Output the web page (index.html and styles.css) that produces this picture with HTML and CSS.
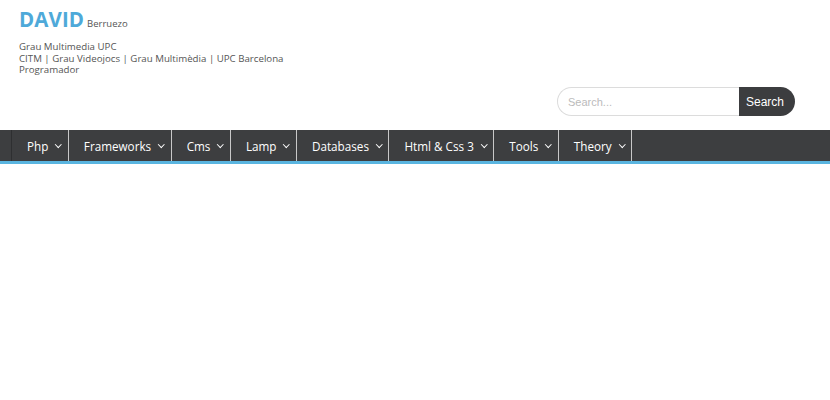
FILE: index.html
```html
<!DOCTYPE html>
<html>
<head>
<meta charset="utf-8">
<link rel="stylesheet" href="styles.css">
</head>
<body>
<header class="site-header">
  <div class="branding">
    <div class="site-title"><span class="title-main">DAVID</span><span class="title-sub">Berruezo</span></div>
    <p class="tagline">Grau Multimedia UPC<br>CITM | Grau Videojocs | Grau Multimèdia | UPC Barcelona<br>Programador</p>
  </div>
  <div class="search-row">
    <form class="search">
      <input class="search-input" type="text" placeholder="Search...">
      <button class="search-btn" type="button">Search</button>
    </form>
  </div>
</header>
<nav class="main-nav">
  <ul class="menu">
    <li class="menu-item">Php<span class="chev"></span></li>
    <li class="menu-item">Frameworks<span class="chev"></span></li>
    <li class="menu-item">Cms<span class="chev"></span></li>
    <li class="menu-item">Lamp<span class="chev"></span></li>
    <li class="menu-item">Databases<span class="chev"></span></li>
    <li class="menu-item">Html &amp; Css 3<span class="chev"></span></li>
    <li class="menu-item">Tools<span class="chev"></span></li>
    <li class="menu-item">Theory<span class="chev"></span></li>
  </ul>
</nav>
</body>
</html>
```
FILE: styles.css
```css
html, body {
  margin: 0;
  padding: 0;
  background: #fff;
}
body {
  font-family: "Open Sans", "Liberation Sans", sans-serif;
  color: #555;
}
.site-header {
  padding: 6px 35px 0 19px;
  height: 122px;
  box-sizing: border-box;
  display: flex;
  flex-direction: column;
}
.site-title {
  display: flex;
  align-items: baseline;
  height: 26px;
}
.title-main {
  font-size: 20.5px;
  font-weight: 700;
  color: #4ea9d9;
  line-height: 26px;
  letter-spacing: 0.1px;
}
.title-sub {
  font-size: 9.5px;
  color: #555;
  margin-left: 3px;
}
.tagline {
  margin: 9px 0 0;
  font-size: 9.7px;
  line-height: 11.5px;
  color: #555;
}
.search-row {
  display: flex;
  justify-content: flex-end;
  margin-top: 11.5px;
}
.search {
  display: flex;
  margin: 0;
}
.search-input {
  width: 182px;
  height: 29px;
  box-sizing: border-box;
  border: 1px solid #dcdcdc;
  border-right: none;
  border-radius: 15px 0 0 15px;
  padding: 0 10px;
  font-family: "Liberation Sans", Arial, sans-serif;
  font-size: 11px;
  outline: none;
}
.search-input::placeholder {
  color: #bbb;
}
.search-btn {
  width: 56px;
  height: 29px;
  border: none;
  background: #3c3d3f;
  color: #fff;
  border-radius: 0 15px 15px 0;
  font-family: "Liberation Sans", Arial, sans-serif;
  font-size: 12px;
  padding: 0 4px 0 0;
}
.main-nav {
  margin-top: 8px;
  background: #3d3e40;
  border-bottom: 3px solid #5ab5e0;
  height: 31px;
}
.menu {
  list-style: none;
  margin: 0;
  padding: 0 0 0 11px;
  display: flex;
  height: 31px;
}
.menu-item {
  display: flex;
  align-items: center;
  border-left: 1px solid #c8c8c8;
  padding: 0 6px 0 15px;
  color: #fff;
  font-size: 11.7px;
}
.menu-item:first-child {
  border-left-color: #2e2f31;
}
.menu-item:last-child {
  border-right: 1px solid #c8c8c8;
}
.chev {
  display: inline-block;
  width: 3.5px;
  height: 3.5px;
  border-right: 1.2px solid #fff;
  border-bottom: 1.2px solid #fff;
  transform: rotate(45deg);
  margin: -3px 1px 0 8px;
}
```
